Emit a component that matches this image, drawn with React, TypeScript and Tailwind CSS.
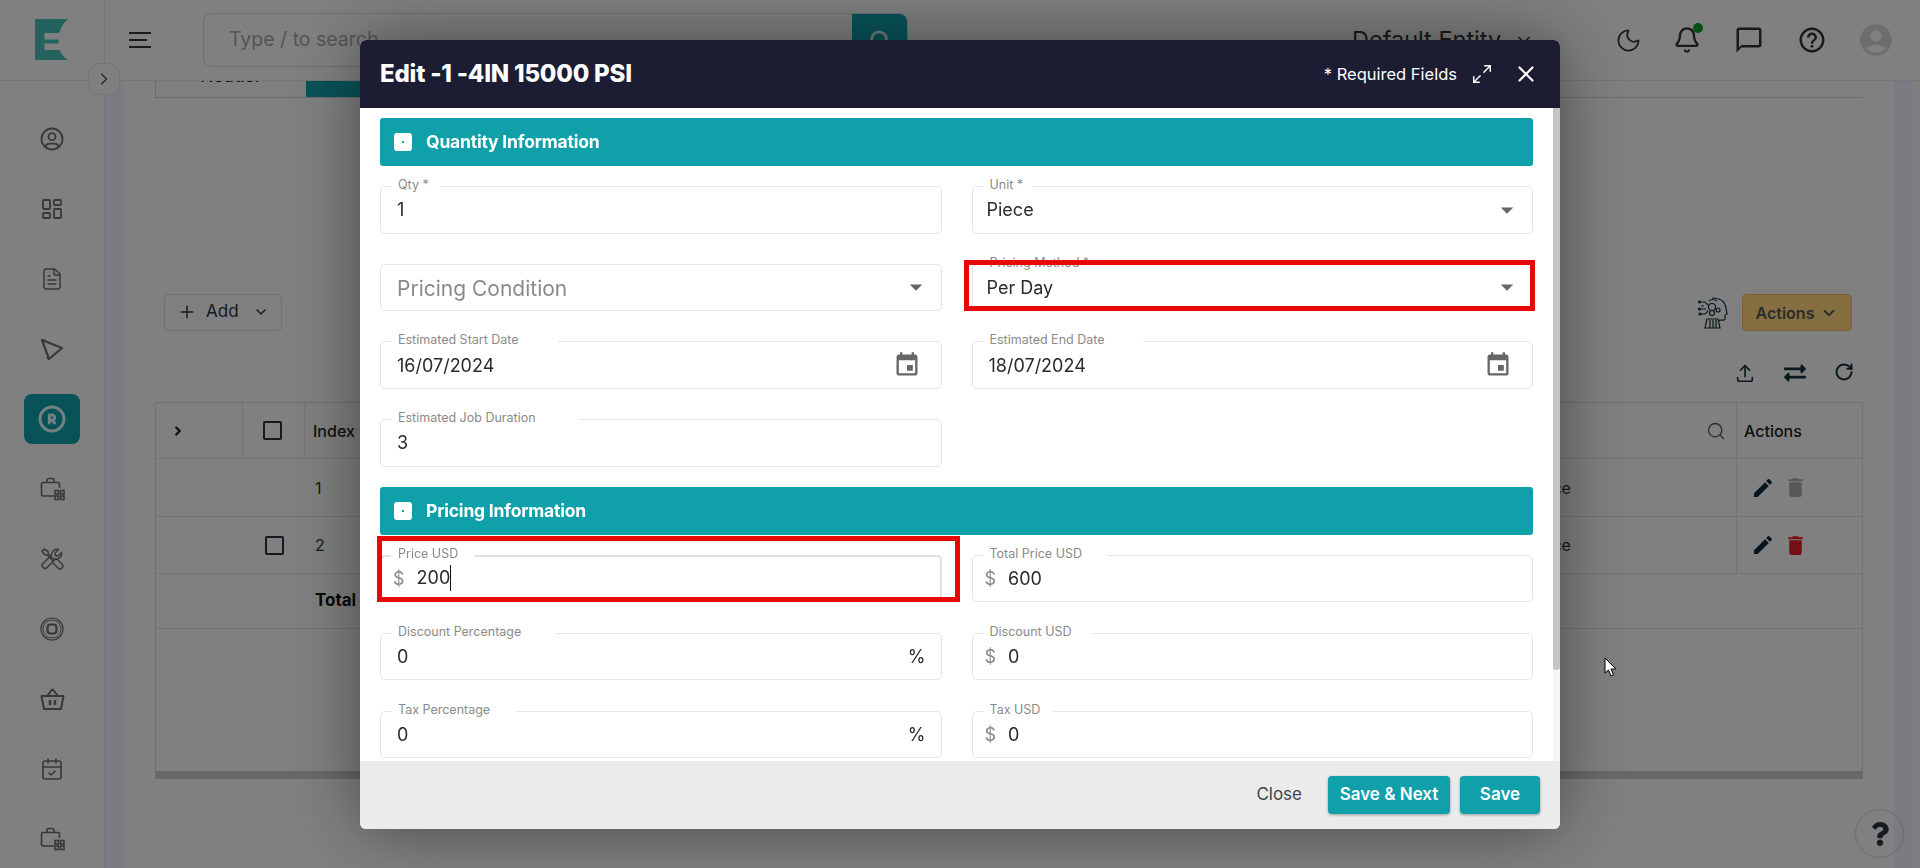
import { ChevronDown, ChevronRight, Search, Plus, Maximize2, X, Moon, Bell, RotateCw, FileText, CalendarCheck, LayoutDashboard } from 'lucide-react';
import { MdEdit, MdDelete, MdEvent, MdOutlineChatBubbleOutline, MdHelpOutline, MdAccountCircle, MdArrowDropDown } from 'react-icons/md';
import { TbRegistered, TbUserCircle, TbUpload } from 'react-icons/tb';
import { FaExchangeAlt, FaQuestion } from 'react-icons/fa';
import type { ReactNode } from 'react';

function CaseGrid() {
  return (
    <svg width="25" height="24" viewBox="0 0 25 24" fill="none" stroke="currentColor" strokeWidth="1.6">
      <path d="M14 19H3a1.5 1.5 0 0 1-1.5-1.5V7A1.5 1.5 0 0 1 3 5.500h15A1.500 1.500 0 0 1 19.500 7v4" />
      <path d="M7 5.500V3a1.500 1.500 0 0 1 1.500-1.500h4A1.500 1.500 0 0 1 14 3v2.500" />
      <rect x="15" y="13.500" width="3.500" height="3.500" />
      <rect x="20.500" y="13.500" width="3.500" height="3.500" />
      <rect x="15" y="19" width="3.500" height="3.500" />
      <rect x="20.500" y="19" width="3.500" height="3.500" />
    </svg>
  );
}

function TargetIcon() {
  return (
    <svg width="24" height="24" viewBox="0 0 24 24" fill="none" stroke="currentColor">
      <circle cx="12" cy="12" r="11" strokeWidth="1.2" />
      <circle cx="12" cy="12" r="9" strokeWidth="1" />
      <rect x="7.500" y="7.500" width="9" height="9" rx="3" strokeWidth="2.200" />
    </svg>
  );
}

function TriangleIcon() {
  return (
    <svg width="24" height="24" viewBox="0 0 24 24" fill="none" stroke="currentColor" strokeWidth="2.200" strokeLinejoin="round">
      <path d="M2 3 L22 11 L9 22 Z" />
      <path d="M2 3 L5 3.500 M9 22 L7 20" />
    </svg>
  );
}

function ToolsIcon() {
  return (
    <svg width="24" height="24" viewBox="0 0 24 24" fill="none" stroke="currentColor" strokeWidth="1.500" strokeLinejoin="round">
      <path d="M2 4L4 2L8 4.500L8.500 7L14 12.500L17 12L22 17A2.800 2.800 0 0 1 18 21L13 16L12.500 13.500L7 8L4.500 7.500Z" />
      <path d="M21.500 5.500L18 9L15.500 8.500L15 6L18.500 2.500A5.500 5.500 0 0 0 11.500 8L3 16.500A2.800 2.800 0 0 0 7 20.500L15.500 12A5.500 5.500 0 0 0 21.500 5.500Z" />
    </svg>
  );
}

function BasketIcon() {
  return (
    <svg width="25" height="24" viewBox="0 0 25 24" fill="none" stroke="currentColor" strokeWidth="2" strokeLinejoin="round">
      <path d="M12.500 2L7 9M12.500 2L18 9" />
      <path d="M1.500 9H23.500L21 22H4Z" />
      <path d="M10 13V18M15 13V18" strokeWidth="2.400" />
    </svg>
  );
}

function AiHead() {
  return (
    <svg width="30" height="32" viewBox="0 0 30 32" fill="none" stroke="#17303a" strokeWidth="1.200">
      <path d="M14 1c7 0 13 3 14 10 0 2 1 4 1 6l-2 1v4c0 1-2 1.500-5 1l-1 1" />
      <path d="M7 31l2-9h11l2 9z" />
      <path d="M12 23v8M15 23v8M18 23v8" />
      <path d="M11 4c2-2 6-2 8 0M1 5h6l3 3M1 12h7M2 17h5l3-3M3 9h3" />
      <circle cx="14" cy="10" r="3.500" />
      <circle cx="14" cy="16" r="2.500" />
      <circle cx="20" cy="13" r="2" />
      <circle cx="1.500" cy="5" r="1" />
      <circle cx="1.500" cy="12" r="1" />
      <circle cx="2" cy="17" r="1" />
    </svg>
  );
}

function SideItem({ children, active }: { children: ReactNode; active?: boolean }) {
  return (
    <div className="h-[70px] flex items-center justify-center">
      {active ? (
        <div className="w-[56px] h-[50px] rounded-lg bg-[#10a0aa] text-[#dff3f4] flex items-center justify-center">{children}</div>
      ) : (
        <div className="text-[#6b6b6b]">{children}</div>
      )}
    </div>
  );
}

function Sidebar() {
  return (
    <aside className="w-[105px] shrink-0 border-r border-[#e4e4e4] pt-[23px]">
      <SideItem><TbUserCircle size={28} strokeWidth={1.6} /></SideItem>
      <SideItem><LayoutDashboard size={24} strokeWidth={1.8} /></SideItem>
      <SideItem><FileText size={24} strokeWidth={1.5} /></SideItem>
      <SideItem><TriangleIcon /></SideItem>
      <SideItem active><TbRegistered size={32} strokeWidth={2.2} /></SideItem>
      <SideItem><CaseGrid /></SideItem>
      <SideItem><ToolsIcon /></SideItem>
      <SideItem><TargetIcon /></SideItem>
      <SideItem><BasketIcon /></SideItem>
      <SideItem><CalendarCheck size={24} strokeWidth={1.6} /></SideItem>
      <SideItem><CaseGrid /></SideItem>
    </aside>
  );
}

function TopBar() {
  return (
    <header className="h-[81px] shrink-0 flex border-b border-[#e4e4e4] relative">
      <div className="w-[105px] border-r border-[#e4e4e4] flex items-center pl-[35px] pb-[1px]">
        <svg width="33" height="41" viewBox="35 19 33 41">
          <path fill="#46bdb5" d="M35 19H68Q61 25 59.500 33H44.500V39.500H58.500V43.500H44.500V50H59.500Q61 55 68 60H35Z" />
        </svg>
      </div>
      <div className="flex-1 flex items-center pl-[24px]">
        <div className="flex flex-col gap-[5px] w-[22px]">
          <div className="h-[2px] bg-[#333]" />
          <div className="h-[2px] w-[18px] bg-[#333]" />
          <div className="h-[2px] bg-[#333]" />
        </div>
        <div className="ml-[52px] w-[705px] h-[54px] flex rounded-lg border border-[#d6d6d6]">
          <div className="flex-1 pl-[25px] flex items-center text-[19.500px] text-[#a3a3a3]">Type / to search</div>
          <div className="w-[55px] rounded-r-lg bg-[#10a0aa] flex items-center justify-center text-[#dff3f4]">
            <Search size={22} strokeWidth={3} />
          </div>
        </div>
        <div className="ml-[444px] flex items-center gap-[13px] text-[23.500px] text-[#333]">
          Default Entity <ChevronDown size={20} strokeWidth={2} />
        </div>
        <div className="ml-auto flex items-center pr-[25px] text-[#333]">
          <Moon size={27} strokeWidth={1.6} />
          <div className="relative ml-[31px]">
            <Bell size={28} strokeWidth={2} />
            <span className="absolute -top-[3px] -right-[2px] w-[10px] h-[10px] rounded-full bg-[#0a9a28]" />
          </div>
          <MdOutlineChatBubbleOutline size={30} className="ml-[33px]" />
          <MdHelpOutline size={30} className="ml-[33px]" />
          <MdAccountCircle size={38} className="ml-[30px] text-[#d4d4d4]" />
        </div>
      </div>
      <button className="absolute left-[88px] top-[63px] w-[32px] h-[32px] rounded-xl border border-[#e0e0e0] bg-[#f6f6f6] flex items-center justify-center text-[#444] z-10">
        <ChevronRight size={20} strokeWidth={1.4} />
      </button>
    </header>
  );
}

function Row({ h, index, bold, checkbox, disabled }: { h: string; index: string; bold?: boolean; checkbox?: boolean; disabled?: boolean }) {
  return (
    <div className={`${h} flex border-b border-[#dcdcdc] items-center`}>
      <div className="w-[109px] shrink-0" />
      <div className="w-[40px] shrink-0 flex">
        {checkbox && <div className="w-[19px] h-[19px] rounded-[2px] border-2 border-[#2e2e3e]" />}
      </div>
      <div className={bold ? 'pl-[10px] font-bold text-[#111] text-[17px]' : 'pl-[10px] text-[#333] text-[16px]'}>{index}</div>
      {!bold && (
        <>
          <div className="ml-auto w-[207px] self-stretch flex items-center text-[#333] text-[16px]">Piece</div>
          <div className="w-[126px] self-stretch border-l border-[#dcdcdc] flex items-center pl-[14px] gap-[8px]">
            <MdEdit size={24} className="text-[#122a38]" />
            <MdDelete size={25} className={disabled ? 'text-[#aaa]' : 'text-[#e2202c]'} />
          </div>
        </>
      )}
    </div>
  );
}

function Content() {
  return (
    <main className="flex-1 flex min-w-0">
      <div className="w-[18px] bg-[#eaedf8]" />
      <div className="flex-1 pl-[32px] pr-[31px]">
        <div className="h-[17px] flex border-b border-[#d0d0d0]">
          <div className="w-[151px] border-l border-[#d0d0d0] bg-[#f4f4f4] overflow-hidden text-center text-[17.500px] leading-[20px]">
            <div className="-mt-[15px] font-medium text-[#222]">Header</div>
          </div>
          <div className="flex-1 max-w-[120px] bg-[#10a0aa]" />
        </div>
        <div className="mt-[196px] h-[37px] flex justify-between pl-[9px] pr-[11px]">
          <div className="w-[118px] rounded-[4px] border border-[#d8d8d8] flex items-center pl-[12px] pb-[1px] text-[#333]">
            <Plus size={20} strokeWidth={1.700} />
            <span className="ml-[9px] text-[17px]">Add</span>
            <ChevronDown size={16} strokeWidth={2.200} className="ml-[14px]" />
          </div>
          <div className="flex items-center gap-[14px]">
            <AiHead />
            <div className="w-[110px] h-[37px] rounded-[4px] bg-[#ffd37a] border border-[#f4b45c] flex items-center justify-center gap-[6px] text-[#555] font-semibold text-[16px]">
              Actions <ChevronDown size={18} strokeWidth={2.400} />
            </div>
          </div>
        </div>
        <div className="h-[71px] pt-[31px] pr-[9px] flex justify-end items-start gap-[28px] text-[#17303a]">
          <TbUpload size={22} strokeWidth={1.800} />
          <FaExchangeAlt size={22} />
          <RotateCw size={20} strokeWidth={2.400} />
        </div>
        <div className="h-[377px] border-x border-t border-[#d8d8d8] flex flex-col">
          <div className="h-[56px] flex border-b border-[#dcdcdc] items-center">
            <div className="w-[87px] self-stretch border-r border-[#dcdcdc] flex items-center pl-[15px]">
              <ChevronRight size={14} strokeWidth={4} className="text-[#1e1e30]" />
            </div>
            <div className="w-[62px] self-stretch border-r border-[#dcdcdc] flex items-center pl-[20px]">
              <div className="w-[19px] h-[19px] rounded-[2px] border-2 border-[#2e2e3e]" />
            </div>
            <div className="pl-[8px] text-[#222] font-medium text-[16px]">Index</div>
            <div className="ml-auto pr-[10px]"><Search size={20} strokeWidth={1.600} className="text-[#555]" /></div>
            <div className="w-[126px] self-stretch border-l border-[#dcdcdc] flex items-center pl-[7px] text-[#222] font-medium text-[16px]">Actions</div>
          </div>
          <Row h="h-[58px]" index="1" disabled />
          <Row h="h-[57px]" index="2" checkbox />
          <Row h="h-[55px]" index="Total" bold />
          <div className="flex-1" />
          <div className="h-[8px] bg-[#c8c8c8]" />
        </div>
      </div>
      <div className="w-[19px] bg-[#eaedf8]" />
      <div className="w-[7px] bg-[#f2f2f2]" />
    </main>
  );
}

function Field({ label, notch, children }: { label: string; notch: string; children: ReactNode }) {
  return (
    <div className="relative h-[47.670px] rounded-[5px] border border-[#e4e4e4] flex items-center pl-[16px] pr-[15px] text-[18px] text-[#2b2b2b]">
      <span className={`absolute left-[10px] -top-[10px] ${notch} pl-[7px] bg-white text-[12.500px] leading-[16px] text-[#8a8a8a]`}>{label}</span>
      {children}
    </div>
  );
}

function SelectArrow() {
  return <MdArrowDropDown size={30} className="ml-auto -mr-[5px] text-[#666]" />;
}

function CalendarIcon() {
  return <MdEvent size={28} className="ml-auto mr-[5px] text-[#666]" />;
}

function SectionBar({ title }: { title: string }) {
  return (
    <div className="h-[48px] rounded-[3px] bg-[#10a0aa] flex items-center pl-[14px] text-white font-bold text-[17.500px] tracking-[-0.2px]">
      <div className="w-[18px] h-[18px] rounded-[3px] bg-white flex items-center justify-center mr-[14px]">
        <div className="w-[2px] h-[2px] bg-[#10a0aa]" />
      </div>
      {title}
    </div>
  );
}

function Dollar() {
  return <span className="mr-[12px] -ml-[4px] text-[#888]">$</span>;
}

function EditModal() {
  return (
    <div className="fixed inset-0 bg-black/[0.48] flex justify-center items-start pt-[40px] z-20">
      <div className="w-[1200px] h-[789px] rounded-[6px] overflow-hidden bg-white flex flex-col shadow-[0_0_70px_rgba(0,0,0,0.45)]">
        <div className="h-[68px] shrink-0 bg-[#1c1d33] flex items-center pl-[20px] pr-[21px] text-white">
          <h2 className="text-[24px] font-extrabold tracking-[-0.2px]">Edit -1 -4IN 15000 PSI</h2>
          <span className="ml-auto text-[16.500px]">* Required Fields</span>
          <Maximize2 size={22} strokeWidth={1.600} className="ml-[14px] -scale-x-100 rotate-90" />
          <X size={26} strokeWidth={2} className="ml-[20px]" />
        </div>
        <div className="flex-1 flex min-h-0">
          <div className="flex-1 pt-[10px] px-[20px] overflow-hidden">
            <SectionBar title="Quantity Information" />
            <div className="mt-[20px] grid grid-cols-2 gap-x-[30px] gap-y-[30px]">
              <Field label="Qty *" notch="w-[50px]">1</Field>
              <Field label="Unit *" notch="w-[50px]"><span className="-ml-[2px]">Piece</span><SelectArrow /></Field>
              <Field label="" notch="hidden">
                <span className="pt-[2px] text-[21px] text-[#8a8a8a]">Pricing Condition</span><SelectArrow />
              </Field>
              <div className="relative">
                <Field label="Pricing Method *" notch="w-[125px]"><span className="-ml-[2px]">Per Day</span><SelectArrow /></Field>
                <div className="absolute -left-[8px] -right-[2px] -top-[4px] bottom-0 border-[5px] border-[#e80808] pointer-events-none" />
              </div>
              <Field label="Estimated Start Date" notch="w-[167px]">16/07/2024<CalendarIcon /></Field>
              <Field label="Estimated End Date" notch="w-[160px]">18/07/2024<CalendarIcon /></Field>
              <Field label="Estimated Job Duration" notch="w-[188px]">3</Field>
            </div>
            <div className="mt-[20px]"><SectionBar title="Pricing Information" /></div>
            <div className="mt-[20px] grid grid-cols-2 gap-x-[30px] gap-y-[30.330px]">
              <div className="relative">
                <div className="absolute inset-0 rounded-[5px] border-2 border-[#e0e0e0]" />
                <Field label="Price USD" notch="w-[83px]">
                  <Dollar /><span className="border-r border-[#111] leading-[26px]">200</span>
                </Field>
                <div className="absolute -left-[3px] -right-[18px] -top-[19px] bottom-0 border-[5px] border-[#e80808] pointer-events-none" />
              </div>
              <Field label="Total Price USD" notch="w-[125px]"><Dollar />600</Field>
              <Field label="Discount Percentage" notch="w-[165px]">0<span className="ml-auto">%</span></Field>
              <Field label="Discount USD" notch="w-[110px]"><Dollar />0</Field>
              <Field label="Tax Percentage" notch="w-[125px]">0<span className="ml-auto">%</span></Field>
              <Field label="Tax USD" notch="w-[70px]"><Dollar />0</Field>
            </div>
          </div>
          <div className="w-[7px] bg-[#f6f6f6]">
            <div className="h-[562px] rounded-b-[3px] bg-[#c4c4c4]" />
          </div>
        </div>
        <div className="h-[68px] shrink-0 bg-[#ebebeb] flex items-center justify-end pr-[20px]">
          <span className="mr-[26px] text-[17px] text-[#3a4650]">Close</span>
          <button className="w-[122px] h-[38px] rounded-[4px] bg-[#10a0aa] text-white font-semibold text-[17px] shadow-[0_1px_3px_rgba(0,0,0,0.35)]">Save &amp; Next</button>
          <button className="ml-[10px] w-[80px] h-[38px] rounded-[4px] bg-[#10a0aa] text-white font-semibold text-[17px] shadow-[0_1px_3px_rgba(0,0,0,0.35)]">Save</button>
        </div>
      </div>
      <svg className="absolute left-[1604px] top-[657px]" width="14" height="20" viewBox="0 0 14 20">
        <path d="M1 1V16L4.500 13L7 19L9.500 18L7 12H12Z" fill="#fff" stroke="#000" strokeWidth="1" />
      </svg>
    </div>
  );
}

export default function App() {
  return (
    <div className="relative w-[1920px] h-[868px] overflow-hidden bg-[#f5f6f7] text-[#333] [font-family:Inter,sans-serif]">
      <div className="h-full flex flex-col">
        <TopBar />
        <div className="flex-1 flex min-h-0">
          <Sidebar />
          <Content />
        </div>
      </div>
      <div className="absolute right-[16px] bottom-[10px] w-[49px] h-[49px] rounded-full border border-[#d0d0d0] flex items-center justify-center text-[#2b3540]">
        <FaQuestion size={24} />
      </div>
      <EditModal />
    </div>
  );
}
